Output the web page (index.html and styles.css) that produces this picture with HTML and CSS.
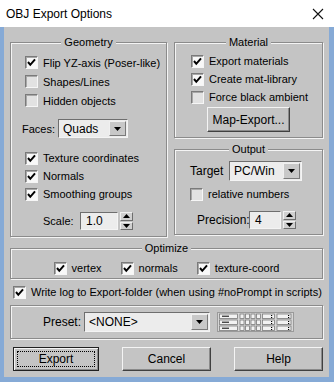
FILE: index.html
```html
<!DOCTYPE html>
<html lang="en">
<head>
    <meta charset="UTF-8">
    <meta name="viewport" content="width=device-width, initial-scale=1.0">
    <title>OBJ Export Options</title>
    <link rel="stylesheet" href="styles.css">
</head>
<body>
    <div class="window">
        <!-- Title bar -->
        <div class="titlebar">
            <span class="title">OBJ Export Options</span>
            <svg class="close" width="12" height="12" viewBox="0 0 12 12">
                <path d="M1 1 L11 11 M11 1 L1 11" stroke="#111" stroke-width="1.1" fill="none"/>
            </svg>
        </div>

        <div class="client">
            <div class="top">
                <!-- Geometry -->
                <div class="group geometry">
                    <div class="group-title">Geometry</div>
                    <div class="rows first">
                        <label class="row"><span class="cb on"><svg width="11" height="11" viewBox="0 0 11 11"><path d="M2 5 L4.3 7.8 L9 2.3" stroke="#000" stroke-width="2" fill="none"/></svg></span>Flip YZ-axis (Poser-like)</label>
                        <label class="row"><span class="cb"></span>Shapes/Lines</label>
                        <label class="row"><span class="cb"></span>Hidden objects</label>
                    </div>
                    <div class="faces">
                        <span class="faces-label">Faces:</span>
                        <div class="dropdown faces-drop">
                            <span class="dd-text">Quads</span>
                            <span class="dd-btn"><svg width="7" height="4" viewBox="0 0 7 4"><path d="M0 0 H7 L3.5 4 Z" fill="#000"/></svg></span>
                        </div>
                    </div>
                    <div class="rows second">
                        <label class="row short"><span class="cb on"><svg width="11" height="11" viewBox="0 0 11 11"><path d="M2 5 L4.3 7.8 L9 2.3" stroke="#000" stroke-width="2" fill="none"/></svg></span>Texture coordinates</label>
                        <label class="row short"><span class="cb on"><svg width="11" height="11" viewBox="0 0 11 11"><path d="M2 5 L4.3 7.8 L9 2.3" stroke="#000" stroke-width="2" fill="none"/></svg></span>Normals</label>
                        <label class="row short"><span class="cb on"><svg width="11" height="11" viewBox="0 0 11 11"><path d="M2 5 L4.3 7.8 L9 2.3" stroke="#000" stroke-width="2" fill="none"/></svg></span>Smoothing groups</label>
                    </div>
                    <div class="spin-row scale">
                        <span class="scale-label">Scale:</span>
                        <span class="field scale-field">1.0</span>
                        <span class="spinner">
                            <span class="sp-btn"><svg width="7" height="4" viewBox="0 0 7 4"><path d="M0 4 H7 L3.5 0 Z" fill="#000"/></svg></span>
                            <span class="sp-btn"><svg width="7" height="4" viewBox="0 0 7 4"><path d="M0 0 H7 L3.5 4 Z" fill="#000"/></svg></span>
                        </span>
                    </div>
                </div>

                <div class="side">
                    <!-- Material -->
                    <div class="group material">
                        <div class="group-title">Material</div>
                        <div class="rows mat-rows">
                            <label class="row short"><span class="cb on"><svg width="11" height="11" viewBox="0 0 11 11"><path d="M2 5 L4.3 7.8 L9 2.3" stroke="#000" stroke-width="2" fill="none"/></svg></span>Export materials</label>
                            <label class="row short"><span class="cb on"><svg width="11" height="11" viewBox="0 0 11 11"><path d="M2 5 L4.3 7.8 L9 2.3" stroke="#000" stroke-width="2" fill="none"/></svg></span>Create mat-library</label>
                            <label class="row short"><span class="cb"></span>Force black ambient</label>
                        </div>
                        <button class="btn map-btn">Map-Export...</button>
                    </div>

                    <!-- Output -->
                    <div class="group output">
                        <div class="group-title">Output</div>
                        <div class="target">
                            <span class="target-label">Target</span>
                            <div class="dropdown target-drop">
                                <span class="dd-text">PC/Win</span>
                                <span class="dd-btn"><svg width="7" height="4" viewBox="0 0 7 4"><path d="M0 0 H7 L3.5 4 Z" fill="#000"/></svg></span>
                            </div>
                        </div>
                        <label class="row short relative"><span class="cb"></span>relative numbers</label>
                        <div class="spin-row precision">
                            <span class="precision-label">Precision:</span>
                            <span class="field precision-field">4</span>
                            <span class="spinner">
                                <span class="sp-btn"><svg width="7" height="4" viewBox="0 0 7 4"><path d="M0 4 H7 L3.5 0 Z" fill="#000"/></svg></span>
                                <span class="sp-btn"><svg width="7" height="4" viewBox="0 0 7 4"><path d="M0 0 H7 L3.5 4 Z" fill="#000"/></svg></span>
                            </span>
                        </div>
                    </div>
                </div>
            </div>

            <!-- Optimize -->
            <div class="group optimize">
                <div class="group-title">Optimize</div>
                <div class="opt-row">
                    <label class="row short"><span class="cb on"><svg width="11" height="11" viewBox="0 0 11 11"><path d="M2 5 L4.3 7.8 L9 2.3" stroke="#000" stroke-width="2" fill="none"/></svg></span>vertex</label>
                    <label class="row short"><span class="cb on"><svg width="11" height="11" viewBox="0 0 11 11"><path d="M2 5 L4.3 7.8 L9 2.3" stroke="#000" stroke-width="2" fill="none"/></svg></span>normals</label>
                    <label class="row short"><span class="cb on"><svg width="11" height="11" viewBox="0 0 11 11"><path d="M2 5 L4.3 7.8 L9 2.3" stroke="#000" stroke-width="2" fill="none"/></svg></span>texture-coord</label>
                </div>
            </div>

            <label class="row log"><span class="cb on"><svg width="11" height="11" viewBox="0 0 11 11"><path d="M2 5 L4.3 7.8 L9 2.3" stroke="#000" stroke-width="2" fill="none"/></svg></span>Write log to Export-folder (when using #noPrompt in scripts)</label>

            <!-- Preset -->
            <div class="group preset">
                <span class="preset-label">Preset:</span>
                <div class="dropdown preset-drop">
                    <span class="dd-text">&lt;NONE&gt;</span>
                    <span class="dd-btn"><svg width="7" height="4" viewBox="0 0 7 4"><path d="M0 0 H7 L3.5 4 Z" fill="#000"/></svg></span>
                </div>
                <svg class="preset-icon" width="77" height="20" viewBox="0 0 77 20">
                    <rect x="0.5" y="0.5" width="76" height="19" fill="#d6d6d6" stroke="#9a9a9a"/>
                    <g fill="#f2f2f2" stroke="#7a7a7a" stroke-width="0.8">
                        <rect x="2.5" y="2" width="18" height="4.5"/>
                        <rect x="2.5" y="8" width="18" height="4.5"/>
                        <rect x="2.5" y="14" width="18" height="4.5"/>
                        <rect x="23" y="2" width="4" height="4.5"/><rect x="28.5" y="2" width="4" height="4.5"/><rect x="34" y="2" width="4" height="4.5"/><rect x="39.5" y="2" width="4" height="4.5"/>
                        <rect x="23" y="8" width="4" height="4.5"/><rect x="28.5" y="8" width="4" height="4.5"/><rect x="34" y="8" width="4" height="4.5"/><rect x="39.5" y="8" width="4" height="4.5"/>
                        <rect x="23" y="14" width="4" height="4.5"/><rect x="28.5" y="14" width="4" height="4.5"/><rect x="34" y="14" width="4" height="4.5"/><rect x="39.5" y="14" width="4" height="4.5"/>
                        <rect x="45.5" y="2" width="12" height="4.5"/><rect x="45.5" y="8" width="12" height="4.5"/><rect x="45.5" y="14" width="12" height="4.5"/>
                        <rect x="60" y="2" width="14" height="4.5"/><rect x="60" y="8" width="14" height="4.5"/><rect x="60" y="14" width="14" height="4.5"/>
                    </g>
                    <g stroke="#000" stroke-width="1">
                        <path d="M5 4.2 H12 M5 10.2 H12 M5 16.2 H12"/>
                    </g>
                    <g fill="#000">
                        <rect x="54" y="3" width="1.2" height="1"/><rect x="54" y="5" width="1.2" height="1"/>
                        <rect x="54" y="9" width="1.2" height="1"/><rect x="54" y="11" width="1.2" height="1"/>
                        <rect x="54" y="15" width="1.2" height="1"/><rect x="54" y="17" width="1.2" height="1"/>
                        <rect x="71" y="3" width="1.2" height="1"/><rect x="71" y="5" width="1.2" height="1"/>
                        <rect x="71" y="9" width="1.2" height="1"/><rect x="71" y="11" width="1.2" height="1"/>
                        <rect x="71" y="15" width="1.2" height="1"/><rect x="71" y="17" width="1.2" height="1"/>
                    </g>
                </svg>
            </div>

            <!-- Dialog buttons -->
            <div class="buttons">
                <button class="btn export-btn"><span class="focus">Export</span></button>
                <button class="btn cancel-btn">Cancel</button>
                <button class="btn help-btn">Help</button>
            </div>
        </div>
    </div>
</body>
</html>
```

FILE: styles.css
```css
/* General Styling */
body {
    margin: 0;
    font-family: 'Liberation Sans', Arial, sans-serif;
    font-size: 11px;
    color: #000;
    background: #3d4a5a;
}

.window {
    width: 334px;
    height: 382px;
    display: flex;
    flex-direction: column;
}

/* Title bar */
.titlebar {
    height: 27px;
    flex: none;
    background: #ffffff;
    display: flex;
    align-items: center;
    justify-content: space-between;
    padding: 0 10px 0 6px;
}

.title {
    font-size: 12px;
}

.close {
    margin-top: 1px;
}

/* Client area */
.client {
    flex: 1;
    background: #c4c4c4;
    border-left: 4px solid #86aad6;
    border-right: 5px solid #86aad6;
    border-bottom: 5px solid #86aad6;
    padding: 15px 6px 0 6px;
    box-sizing: border-box;
    display: flex;
    flex-direction: column;
}

.top {
    display: grid;
    grid-template-columns: 157px 149px;
    gap: 7px;
}

.side {
    display: flex;
    flex-direction: column;
    gap: 11px;
}

/* Group boxes */
.group {
    border: 1px solid #8b8b8b;
    box-shadow: 1px 1px 0 #f4f4f4, inset 1px 1px 0 #f4f4f4;
    box-sizing: border-box;
}

.group-title {
    display: table;
    margin: -7px auto 0;
    padding: 0 3px;
    line-height: 13px;
    height: 13px;
    background: #c4c4c4;
}

.geometry {
    height: 195px;
}

.material {
    height: 96px;
}

.output {
    height: 86px;
}

.optimize {
    height: 31px;
    margin-top: 11px;
}

/* Checkbox rows */
.row {
    display: flex;
    align-items: center;
    gap: 5px;
    height: 19px;
    white-space: nowrap;
}

.row.short {
    height: 18px;
}

.cb {
    width: 13px;
    height: 13px;
    box-sizing: border-box;
    flex: none;
    border: 1px solid;
    border-color: #7a7a7a #f6f6f6 #f6f6f6 #7a7a7a;
    box-shadow: inset 1px 1px 0 #a8a8a8;
    background: #e2e2e2;
    display: flex;
    align-items: center;
    justify-content: center;
}

.cb.on {
    background: #f8f8f8;
}

.cb svg {
    display: block;
}

.rows.first {
    margin-top: 4px;
    padding-left: 14px;
}

.rows.second {
    margin-top: 11px;
    padding-left: 14px;
}

.mat-rows {
    margin-top: 3px;
    padding-left: 16px;
}

/* Dropdowns and fields */
.dropdown {
    display: flex;
    align-items: stretch;
    height: 20px;
    box-sizing: border-box;
    border: 1px solid;
    border-color: #6e6e6e #f4f4f4 #f4f4f4 #6e6e6e;
    background: #ececec;
}

.dd-text {
    flex: 1;
    padding-left: 4px;
    display: flex;
    align-items: center;
    font-size: 12px;
}

.dd-btn {
    width: 15px;
    flex: none;
    margin: 1px;
    background: #c8c8c8;
    border: 1px solid;
    border-color: #f0f0f0 #7a7a7a #7a7a7a #f0f0f0;
    display: flex;
    align-items: center;
    justify-content: center;
}

.faces {
    display: flex;
    align-items: center;
    margin-top: 9px;
    padding-left: 11px;
    height: 19px;
}

.faces-label {
    width: 36px;
}

.faces-drop {
    width: 70px;
    height: 19px;
}

.field {
    height: 18px;
    box-sizing: border-box;
    border: 1px solid;
    border-color: #6e6e6e #f4f4f4 #f4f4f4 #6e6e6e;
    background: #ececec;
    padding-left: 5px;
    display: flex;
    align-items: center;
    font-size: 12px;
}

.spinner {
    display: flex;
    flex-direction: column;
    width: 13px;
    height: 18px;
    margin-left: 2px;
    gap: 1px;
}

.sp-btn {
    flex: 1;
    background: #d0d0d0;
    border: 1px solid;
    border-color: #f0f0f0 #6e6e6e #6e6e6e #f0f0f0;
    display: flex;
    align-items: center;
    justify-content: center;
}

.spin-row {
    display: flex;
    align-items: center;
    height: 18px;
}

.scale {
    margin-top: 9px;
    padding-left: 32px;
}

.scale-label {
    width: 37px;
}

.scale-field {
    width: 38px;
}

/* Output */
.target {
    display: flex;
    align-items: center;
    margin-top: 5px;
    padding-left: 15px;
}

.target-label {
    width: 39px;
    font-size: 12px;
}

.target-drop {
    width: 73px;
}

.relative {
    margin-top: 4px;
    padding-left: 15px;
}

.precision {
    margin-top: 8px;
    padding-left: 22px;
}

.precision-label {
    width: 52px;
    font-size: 12px;
}

.precision-field {
    width: 32px;
}

/* Optimize */
.opt-row {
    display: flex;
    justify-content: center;
    gap: 19px;
    margin-top: 4px;
}

.log {
    height: 26px;
    padding-left: 3px;
}

/* Preset */
.preset {
    height: 34px;
    display: flex;
    align-items: center;
    padding-left: 32px;
}

.preset-label {
    width: 41px;
    font-size: 12px;
}

.preset-drop {
    width: 126px;
}

.preset-icon {
    margin-left: 7px;
    display: block;
}

/* Buttons */
.btn {
    font-family: inherit;
    font-size: 12px;
    color: #000;
    background: #c4c4c4;
    border: 1px solid;
    border-color: #f4f4f4 #404040 #404040 #f4f4f4;
    box-shadow: inset -1px -1px 0 #8a8a8a;
    padding: 0;
    box-sizing: border-box;
}

.map-btn {
    display: block;
    width: 83px;
    height: 25px;
    margin: 1px auto 0;
}

.buttons {
    display: flex;
    gap: 23px;
    margin-top: 8px;
    padding-left: 3px;
}

.buttons .btn {
    height: 24px;
}

.export-btn {
    width: 86px;
    padding: 3px;
    border-color: #202020;
    box-shadow: inset 1px 1px 0 #f4f4f4, inset -1px -1px 0 #8a8a8a;
}

.focus {
    display: flex;
    align-items: center;
    justify-content: center;
    height: 100%;
    border: 1px dotted #000;
    box-sizing: border-box;
}

.cancel-btn {
    width: 89px;
}

.help-btn {
    width: 89px;
}
```
